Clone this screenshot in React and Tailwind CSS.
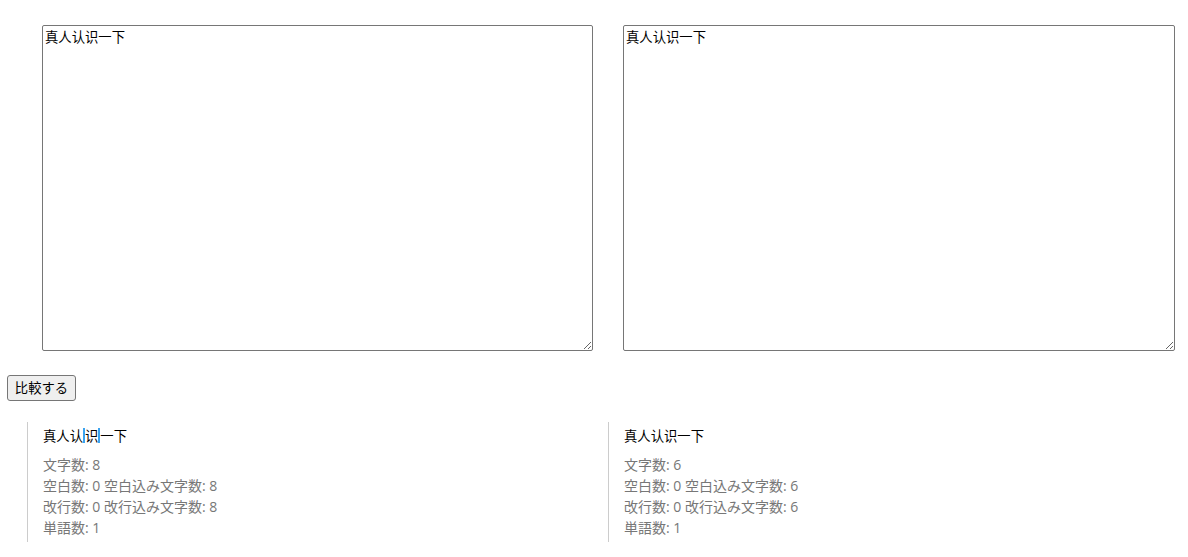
const cjk = '"Noto Sans CJK SC", "Noto Sans CJK JP", sans-serif';

const Stats = ({ count }) => (
  <div className="mt-2 text-[14px] leading-[21px] text-[#777]" style={{ fontFamily: '"Open Sans", "Noto Sans CJK JP", sans-serif' }}>
    <div>文字数: {count}</div>
    <div>空白数: 0 空白込み文字数: {count}</div>
    <div>改行数: 0 改行込み文字数: {count}</div>
    <div>単語数: 1</div>
  </div>
);

export default function App() {
  return (
    <div className="min-h-[557px] bg-white text-black pt-[25px]" style={{ fontFamily: cjk }}>
      <div className="flex pl-[42px] gap-[30px]">
        <textarea
          defaultValue="真人认识一下"
          className="w-[551px] h-[326px] border border-[#767676] rounded-[2px] px-[2px] pt-[3px] text-[13.33px] leading-[16px] outline-none"
          style={{ fontFamily: cjk }}
        />
        <textarea
          defaultValue="真人认识一下"
          className="w-[552px] h-[326px] border border-[#767676] rounded-[2px] px-[2px] pt-[3px] text-[13.33px] leading-[16px] outline-none"
          style={{ fontFamily: cjk }}
        />
      </div>

      <div className="pl-[7px] mt-[24px]">
        <button className="w-[69px] h-[26px] bg-[#efefef] border border-[#767676] rounded-[3px] text-[13.33px] text-black flex items-center justify-center">
          比較する
        </button>
      </div>

      <div className="flex pl-[27px] mt-[21px]">
        <div className="w-[581px] border-l border-[#ccc] pl-[15px] pt-[3px] pb-[4px]">
          <div className="text-[13.33px] leading-[21px] flex items-center">
            <span>真人认</span>
            <span className="inline-block border-l-2 border-r-2 border-solid border-[#3aa3f0] leading-[15px]">识</span>
            <span>一下</span>
          </div>
          <Stats count={8} />
        </div>
        <div className="w-[560px] border-l border-[#ccc] pl-[15px] pt-[3px] pb-[4px]">
          <div className="text-[13.33px] leading-[21px]">真人认识一下</div>
          <Stats count={6} />
        </div>
      </div>
    </div>
  );
}
